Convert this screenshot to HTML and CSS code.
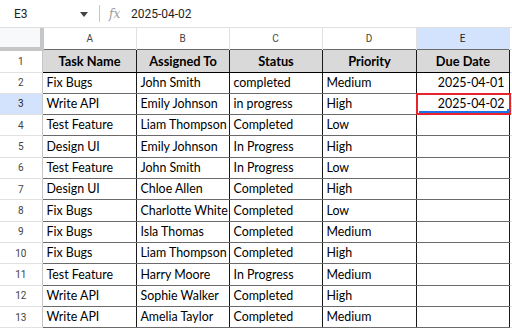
FILE: index.html
```html
<!DOCTYPE html>
<html>
<head>
<meta charset="utf-8">
<link rel="stylesheet" href="styles.css">
</head>
<body>
<div class="fbar">
  <div class="namebox">E3</div>
  <div class="caret"><svg width="8" height="5" viewBox="0 0 8 5"><path d="M0 0h8L4 5z" fill="#444"/></svg></div>
  <div class="sep"></div>
  <div class="fx">fx</div>
  <div class="ftext">2025-04-02</div>
</div>
<table class="sheet">
  <colgroup>
    <col class="c-rh"><col class="c-a"><col class="c-b"><col class="c-c"><col class="c-d"><col class="c-e"><col class="c-f">
  </colgroup>
  <tr class="colhead">
    <th class="corner"></th><th>A</th><th>B</th><th>C</th><th>D</th><th class="sel">E</th><th class="fcol"></th>
  </tr>
  <tr class="r1">
    <th class="rh">1</th><td class="hd">Task Name</td><td class="hd">Assigned To</td><td class="hd">Status</td><td class="hd">Priority</td><td class="hd">Due Date</td><td class="fcol"></td>
  </tr>
  <tr><th class="rh">2</th><td>Fix Bugs</td><td>John Smith</td><td>completed</td><td>Medium</td><td class="num">2025-04-01</td><td class="fcol"></td></tr>
  <tr><th class="rh sel">3</th><td>Write API</td><td>Emily Johnson</td><td>in progress</td><td>High</td><td class="num active">2025-04-02<div class="selbox"><div class="selline"></div><div class="handle"></div></div></td><td class="fcol"></td></tr>
  <tr><th class="rh">4</th><td>Test Feature</td><td>Liam Thompson</td><td>Completed</td><td>Low</td><td></td><td class="fcol"></td></tr>
  <tr><th class="rh">5</th><td>Design UI</td><td>Emily Johnson</td><td>In Progress</td><td>High</td><td></td><td class="fcol"></td></tr>
  <tr><th class="rh">6</th><td>Test Feature</td><td>John Smith</td><td>In Progress</td><td>Low</td><td></td><td class="fcol"></td></tr>
  <tr><th class="rh">7</th><td>Design UI</td><td>Chloe Allen</td><td>Completed</td><td>High</td><td></td><td class="fcol"></td></tr>
  <tr><th class="rh">8</th><td>Fix Bugs</td><td>Charlotte White</td><td>Completed</td><td>Low</td><td></td><td class="fcol"></td></tr>
  <tr><th class="rh">9</th><td>Fix Bugs</td><td>Isla Thomas</td><td>Completed</td><td>Medium</td><td></td><td class="fcol"></td></tr>
  <tr><th class="rh">10</th><td>Fix Bugs</td><td>Liam Thompson</td><td>Completed</td><td>High</td><td></td><td class="fcol"></td></tr>
  <tr><th class="rh">11</th><td>Test Feature</td><td>Harry Moore</td><td>In Progress</td><td>Medium</td><td></td><td class="fcol"></td></tr>
  <tr><th class="rh">12</th><td>Write API</td><td>Sophie Walker</td><td>Completed</td><td>High</td><td></td><td class="fcol"></td></tr>
  <tr><th class="rh">13</th><td>Write API</td><td>Amelia Taylor</td><td>Completed</td><td>Medium</td><td></td><td class="fcol"></td></tr>
</table>
</body>
</html>
```
FILE: styles.css
```css
html, body {
  margin: 0;
  padding: 0;
  background: #fff;
  width: 512px;
  height: 328px;
  overflow: hidden;
}
.fbar {
  height: 27px;
  display: flex;
  align-items: center;
  border-bottom: 1px solid #e1e1e1;
  font-family: Roboto, "Liberation Sans", sans-serif;
  font-size: 12px;
  color: #1f1f1f;
}
.namebox {
  width: 66px;
  padding-left: 14px;
}
.caret {
  width: 10px;
  display: flex;
  align-items: center;
  margin-top: 1px;
}
.sep {
  width: 1px;
  height: 17px;
  background: #c7c7c7;
  margin-left: 9px;
  margin-right: 9px;
}
.fx {
  font-family: "DejaVu Serif", serif;
  font-style: italic;
  color: #9a9a9a;
  font-size: 12px;
  width: 22px;
}
.sheet {
  border-collapse: collapse;
  table-layout: fixed;
  width: 512px;
  font-family: Lato, "Open Sans", sans-serif;
  font-size: 12.4px;
  color: #000;
}
.c-rh { width: 42px; }
.c-a { width: 94px; }
.c-b { width: 93px; }
.c-c { width: 93px; }
.c-d { width: 94px; }
.c-e { width: 93px; }
.c-f { width: 3px; }
.colhead th {
  height: 21px;
  padding: 0;
  font-family: Roboto, "Liberation Sans", sans-serif;
  font-weight: normal;
  font-size: 10px;
  color: #444;
  background: #fff;
  border-left: 1px solid #e1e1e1;
  border-right: 1px solid #e1e1e1;
  box-sizing: border-box;
}
.colhead th.sel {
  background: #d3e3fd;
  color: #1f1f1f;
}
.colhead th.corner {
  background: #f8f9fa;
  border-right: 4px solid #c4c7c5;
  border-bottom: 4px solid #c4c7c5;
  border-left: none;
}
th.rh {
  padding: 0;
  font-family: Roboto, "Liberation Sans", sans-serif;
  font-weight: normal;
  font-size: 10px;
  color: #444;
  background: #fff;
  border-top: 1px solid #e1e1e1;
  border-bottom: 1px solid #e1e1e1;
  border-right: 1px solid #c4c7c5;
}
th.rh.sel {
  background: #d3e3fd;
  color: #1f1f1f;
}
td {
  height: 20px;
  padding: 0 3px 0 4px;
  white-space: nowrap;
  overflow: hidden;
  border-left: 1px solid #1a1a1a;
  border-right: 1px solid #1a1a1a;
  border-top: 1px solid #6a6a6a;
  border-bottom: 1px solid #6a6a6a;
  line-height: 20px;
  box-sizing: border-box;
}
tr { height: 21.33px; }
tr.colhead { height: 21px; }
tr.r1 { height: 23px; }
td.hd {
  background: #d9d9d9;
  font-weight: bold;
  font-size: 12.8px;
  text-align: center;
  border-bottom: 1px solid #000;
}
td.num { text-align: right; padding-right: 4px; }
td.fcol {
  border-right: none;
  border-top: 1px solid #e1e1e1;
  border-bottom: 1px solid #e1e1e1;
  padding: 0;
}
td.active {
  position: relative;
  overflow: visible;
}
.selbox {
  position: absolute;
  left: -1px;
  top: -1px;
  right: -2px;
  bottom: -1px;
  border: 2px solid #e8232b;
}
.selline {
  position: absolute;
  left: 1px;
  right: 1px;
  bottom: 0;
  height: 2px;
  background: #1a73e8;
}
.handle {
  position: absolute;
  right: -1px;
  bottom: 0;
  width: 3px;
  height: 4px;
  background: #1a73e8;
}
```
